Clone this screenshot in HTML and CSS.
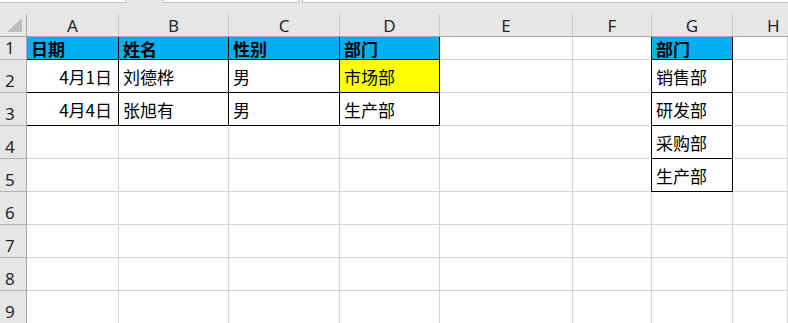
FILE: index.html
```html
<!DOCTYPE html>
<html lang="zh-CN">
<head>
    <meta charset="UTF-8">
    <title>部门表</title>
    <link rel="stylesheet" href="styles.css">
</head>
<body>
    <div class="topbar">
        <div class="tab tab-name"></div>
        <div class="tab tab-fx"></div>
        <div class="tab tab-formula"></div>
    </div>

    <div class="sheet">
        <!-- column headers -->
        <div class="corner">
            <svg width="16" height="15" viewBox="0 0 16 15"><polygon points="15,0 15,14 0,14" fill="#bcbcbc"/></svg>
        </div>
        <div class="col-head">A</div>
        <div class="col-head">B</div>
        <div class="col-head">C</div>
        <div class="col-head">D</div>
        <div class="col-head">E</div>
        <div class="col-head">F</div>
        <div class="col-head">G</div>
        <div class="col-head last">H</div>

        <!-- row 1 -->
        <div class="row-head">1</div>
        <div class="cell blue boxed bold">日期</div>
        <div class="cell blue boxed bold">姓名</div>
        <div class="cell blue boxed bold">性别</div>
        <div class="cell blue boxed bold">部门</div>
        <div class="cell"></div>
        <div class="cell"></div>
        <div class="cell blue boxed box-left bold">部门</div>
        <div class="cell"></div>

        <!-- row 2 -->
        <div class="row-head">2</div>
        <div class="cell boxed num">4月1日</div>
        <div class="cell boxed">刘德桦</div>
        <div class="cell boxed">男</div>
        <div class="cell boxed yellow">市场部</div>
        <div class="cell"></div>
        <div class="cell"></div>
        <div class="cell boxed box-left">销售部</div>
        <div class="cell"></div>

        <!-- row 3 -->
        <div class="row-head">3</div>
        <div class="cell boxed num">4月4日</div>
        <div class="cell boxed">张旭有</div>
        <div class="cell boxed">男</div>
        <div class="cell boxed">生产部</div>
        <div class="cell"></div>
        <div class="cell"></div>
        <div class="cell boxed box-left">研发部</div>
        <div class="cell"></div>

        <!-- row 4 -->
        <div class="row-head">4</div>
        <div class="cell"></div>
        <div class="cell"></div>
        <div class="cell"></div>
        <div class="cell"></div>
        <div class="cell"></div>
        <div class="cell"></div>
        <div class="cell boxed box-left">采购部</div>
        <div class="cell"></div>

        <!-- row 5 -->
        <div class="row-head">5</div>
        <div class="cell"></div>
        <div class="cell"></div>
        <div class="cell"></div>
        <div class="cell"></div>
        <div class="cell"></div>
        <div class="cell"></div>
        <div class="cell boxed box-left">生产部</div>
        <div class="cell"></div>

        <!-- rows 6-9 -->
        <div class="row-head">6</div>
        <div class="cell"></div><div class="cell"></div><div class="cell"></div><div class="cell"></div>
        <div class="cell"></div><div class="cell"></div><div class="cell"></div><div class="cell"></div>

        <div class="row-head">7</div>
        <div class="cell"></div><div class="cell"></div><div class="cell"></div><div class="cell"></div>
        <div class="cell"></div><div class="cell"></div><div class="cell"></div><div class="cell"></div>

        <div class="row-head">8</div>
        <div class="cell"></div><div class="cell"></div><div class="cell"></div><div class="cell"></div>
        <div class="cell"></div><div class="cell"></div><div class="cell"></div><div class="cell"></div>

        <div class="row-head">9</div>
        <div class="cell"></div><div class="cell"></div><div class="cell"></div><div class="cell"></div>
        <div class="cell"></div><div class="cell"></div><div class="cell"></div><div class="cell"></div>
    </div>
</body>
</html>
```

FILE: styles.css
```css
body {
    margin: 0;
    background: #fff;
    overflow: hidden;
    font-family: "Noto Sans CJK SC", "Noto Sans", sans-serif;
}
.topbar {
    height: 14px;
    background: #e6e6e6;
    display: flex;
    align-items: flex-start;
}
.tab {
    height: 2px;
    background: #fff;
    border-bottom: 1px solid #c3c3c3;
}
.tab-name {
    width: 125px;
    border-right: 1px solid #c3c3c3;
}
.tab-fx {
    width: 134px;
    margin-left: 37px;
    border-left: 1px solid #c3c3c3;
    border-right: 1px solid #c3c3c3;
}
.tab-formula {
    flex: 1;
    margin-left: 3px;
    border-left: 1px solid #c3c3c3;
}
.sheet {
    display: grid;
    grid-template-columns: 27px 92px 110px 111px 100px 133px 79px 81px 1fr;
    grid-template-rows: 23px 23px repeat(8, 33px);
}
.sheet > div {
    box-sizing: border-box;
}
.corner {
    background: #e6e6e6;
    border-right: 1px solid #a6a6a6;
    border-bottom: 1px solid #a6a6a6;
    display: flex;
    align-items: flex-end;
    justify-content: flex-end;
    padding: 0 3px 3px 0;
}
.corner svg {
    display: block;
}
.col-head {
    background: #e6e6e6;
    border-right: 1px solid #c8c8c8;
    border-bottom: 1px solid #a6a6a6;
    color: #262626;
    font-family: "Noto Sans", "Liberation Sans", sans-serif;
    font-size: 17px;
    line-height: 20px;
    display: flex;
    align-items: flex-end;
    justify-content: center;
}
.col-head.last {
    border-right: none;
    justify-content: flex-start;
    padding-left: 34px;
}
.row-head {
    background: #e6e6e6;
    border-right: 1px solid #a6a6a6;
    border-bottom: 1px solid #b4b4b4;
    color: #262626;
    font-family: "Noto Sans", "Liberation Sans", sans-serif;
    font-size: 17px;
    line-height: 20px;
    display: flex;
    align-items: flex-end;
    padding: 0 0 1px 5px;
}
.cell {
    border-right: 1px solid #d4d4d4;
    border-bottom: 1px solid #d4d4d4;
    color: #000;
    font-size: 17px;
    line-height: 20px;
    display: flex;
    align-items: center;
    padding: 1px 4px 0 4px;
    white-space: nowrap;
    overflow: hidden;
}
.cell.boxed {
    border-right-color: #000;
    border-bottom-color: #000;
}
.cell.box-left {
    box-shadow: -1px 0 0 #000;
}
.cell.bold {
    font-weight: bold;
}
.cell.num {
    justify-content: flex-end;
    padding-right: 6px;
}
.blue {
    background: #00b0f0;
}
.yellow {
    background: #ffff00;
}
```
